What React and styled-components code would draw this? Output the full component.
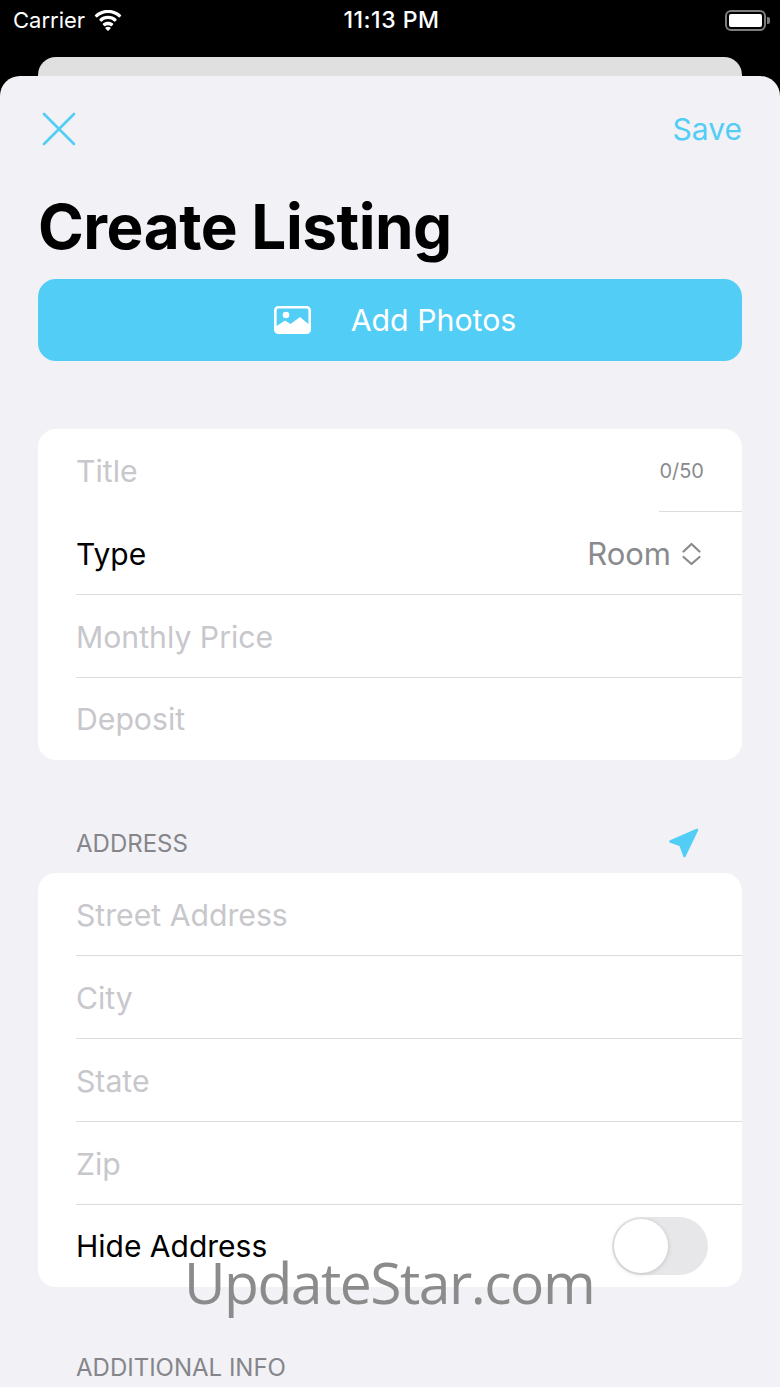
import styled, { createGlobalStyle } from 'styled-components';

const Global = createGlobalStyle`
  html, body {
    margin: 0;
    padding: 0;
    background: #000;
  }
  * {
    box-sizing: border-box;
  }
`;

function Wifi() {
  return (
    <svg width='28' height='21' viewBox='0 0 30 22'>
      <path fill='#fff' d='M15 3c4.400 0 8.500 1.700 11.500 4.600.3.300.8.300 1.100 0l1.300-1.400c.4-.4.3-.9 0-1.200C25.200 1.500 20.300-.5 15-.5S4.800 1.500 1.100 5c-.3.300-.4.800 0 1.200l1.300 1.400c.3.300.8.300 1.100 0C6.500 4.700 10.600 3 15 3z' />
      <path fill='#fff' d='M15 9.500c2.500 0 4.800.9 6.600 2.600.3.300.8.300 1.100 0l1.400-1.400c.3-.4.3-.9 0-1.200C21.700 7.200 18.500 6 15 6s-6.700 1.200-9.100 3.500c-.3.300-.3.800 0 1.200l1.400 1.400c.3.300.8.300 1.100 0 1.800-1.700 4.100-2.600 6.600-2.600z' />
      <path fill='#fff' d='M15 16c1.100 0 2.100.4 2.900 1 .3.300.8.300 1.100 0l1.400-1.500c.3-.3.3-.9 0-1.200-1.500-1.200-3.400-1.900-5.400-1.900s-3.900.7-5.400 1.900c-.3.300-.3.900 0 1.200L11 17c.3.300.8.300 1.100 0 .8-.6 1.800-1 2.900-1z' />
      <path fill='#fff' d='M15 22c.3 0 .5-.1.700-.3l2-2c.3-.3.300-.8 0-1.100-.7-.5-1.700-.9-2.700-.9s-2 .4-2.700.9c-.3.300-.3.800 0 1.100l2 2c.2.200.4.300.7.300z' />
    </svg>
  );
}

function CloseIcon() {
  return (
    <svg width='34' height='34' viewBox='0 0 34 34'>
      <path d='M2 2 L32 32 M32 2 L2 32' stroke='#52cdf6' strokeWidth='2.6' strokeLinecap='round' />
    </svg>
  );
}

function PhotoIcon() {
  return (
    <svg width='37' height='28' viewBox='0 0 37 28'>
      <rect x='1.300' y='1.300' width='34.400' height='25.400' rx='3' fill='none' stroke='#fff' strokeWidth='2.600' />
      <circle cx='12' cy='9' r='3.300' fill='#fff' />
      <path fill='#fff' d='M2 26 V20.500 L11 14.500 L16.500 18 L26 11 L35 18.500 V26 Z' />
    </svg>
  );
}

function Chevrons() {
  return (
    <svg width='21' height='24' viewBox='0 0 21 24'>
      <path d='M2.500 9.500 L10.500 2 L18.500 9.500 M2.500 15 L10.500 22 L18.500 15' fill='none' stroke='#8a8a8e' strokeWidth='2.200' strokeLinecap='round' strokeLinejoin='round' />
    </svg>
  );
}

function LocationArrow() {
  return (
    <svg width='32' height='32' viewBox='0 0 32 32'>
      <path fill='#52cdf6' stroke='#52cdf6' strokeWidth='2.500' strokeLinejoin='round' d='M29 3 L2.500 14.500 L12.500 18 L16.500 29 Z' />
    </svg>
  );
}

function App() {
  return (
    <Screen>
      <Global />
      <StatusBar>
        <StatusLeft>
          Carrier
          <Wifi />
        </StatusLeft>
        <Clock>11:13 PM</Clock>
        <Battery>
          <BatteryBody>
            <BatteryFill />
          </BatteryBody>
          <BatteryCap />
        </Battery>
      </StatusBar>
      <PeekCard />
      <Sheet>
        <NavRow>
          <CloseIcon />
          <SaveLabel>Save</SaveLabel>
        </NavRow>
        <PageTitle>Create Listing</PageTitle>
        <AddPhotos>
          <PhotoIcon />
          Add Photos
        </AddPhotos>

        <FormCard $top='68px'>
          <Row $partial>
            <Placeholder>Title</Placeholder>
            <Counter>0/50</Counter>
          </Row>
          <Row>
            <Label>Type</Label>
            <Picker>
              Room
              <Chevrons />
            </Picker>
          </Row>
          <Row>
            <Placeholder>Monthly Price</Placeholder>
          </Row>
          <Row $last>
            <Placeholder>Deposit</Placeholder>
          </Row>
        </FormCard>

        <SectionHead $top='53px'>
          ADDRESS
          <LocationArrow />
        </SectionHead>
        <FormCard>
          <Row>
            <Placeholder>Street Address</Placeholder>
          </Row>
          <Row>
            <Placeholder>City</Placeholder>
          </Row>
          <Row>
            <Placeholder>State</Placeholder>
          </Row>
          <Row>
            <Placeholder>Zip</Placeholder>
          </Row>
          <Row $last>
            <Label>Hide Address</Label>
            <Toggle>
              <Knob />
            </Toggle>
          </Row>
        </FormCard>

        <SectionHead $top='50px'>ADDITIONAL INFO</SectionHead>
      </Sheet>
      <Watermark>UpdateStar.com</Watermark>
    </Screen>
  );
}

const Screen = styled.div`
  position: relative;
  width: 780px;
  height: 1387px;
  overflow: hidden;
  background: #000;
  font-family: Inter, 'Liberation Sans', sans-serif;
`;

const StatusBar = styled.div`
  display: flex;
  align-items: center;
  justify-content: space-between;
  height: 57px;
  padding: 0 10px 17px 13px;
  color: #fff;
  font-size: 22px;
`;

const StatusLeft = styled.div`
  display: flex;
  align-items: center;
  gap: 9px;
  width: 200px;
`;

const Clock = styled.div`
  font-size: 23px;
  font-weight: 500;
  letter-spacing: 0.5px;
`;

const Battery = styled.div`
  display: flex;
  align-items: center;
  justify-content: flex-end;
  gap: 1px;
  width: 200px;
`;

const BatteryBody = styled.div`
  width: 41px;
  height: 21px;
  padding: 2px;
  border: 2px solid #7d7d7d;
  border-radius: 6px;
`;

const BatteryFill = styled.div`
  height: 100%;
  background: #fff;
  border-radius: 2px;
`;

const BatteryCap = styled.div`
  width: 3px;
  height: 7px;
  background: #7d7d7d;
  border-radius: 0 2px 2px 0;
`;

const PeekCard = styled.div`
  height: 19px;
  margin: 0 38px;
  background: #e0e0e0;
  border-radius: 18px 18px 0 0;
`;

const Sheet = styled.div`
  height: 1311px;
  padding: 36px 38px 0;
  background: #f1f1f6;
  border-radius: 20px 20px 0 0;
`;

const NavRow = styled.div`
  display: flex;
  align-items: center;
  justify-content: space-between;
  height: 34px;
  padding-left: 4px;
`;

const SaveLabel = styled.span`
  color: #52cdf6;
  font-size: 30px;
`;

const PageTitle = styled.h1`
  height: 133px;
  margin: 0;
  padding-top: 45px;
  color: #000;
  font-size: 62px;
  font-weight: 700;
  line-height: 72px;
  letter-spacing: -0.5px;
`;

const AddPhotos = styled.div`
  display: flex;
  align-items: center;
  justify-content: center;
  gap: 40px;
  height: 82px;
  padding-left: 10px;
  color: #fff;
  background: #52cdf6;
  border-radius: 18px;
  font-size: 30.300px;
`;

const FormCard = styled.div`
  margin-top: ${(p) => p.$top || '0'};
  padding-left: 38px;
  background: #fff;
  border-radius: 18px;
  overflow: hidden;
`;

const Row = styled.div`
  position: relative;
  display: flex;
  align-items: center;
  justify-content: space-between;
  height: ${(p) => (p.$last ? '82px' : '83px')};
  padding-right: 38px;

  &::after {
    content: '';
    display: ${(p) => (p.$last ? 'none' : 'block')};
    position: absolute;
    right: 0;
    bottom: 0;
    left: ${(p) => (p.$partial ? '583px' : '0')};
    height: 1px;
    background: #dcdce0;
  }
`;

const Placeholder = styled.span`
  color: #c7c7cc;
  font-size: 30.200px;
`;

const Label = styled.span`
  color: #000;
  font-size: 30px;
`;

const Counter = styled.span`
  color: #8a8a8e;
  font-size: 20px;
`;

const Picker = styled.span`
  display: flex;
  align-items: center;
  gap: 10px;
  margin-right: 2px;
  color: #8a8a8e;
  font-size: 31px;
`;

const Toggle = styled.div`
  display: flex;
  align-items: center;
  width: 96px;
  height: 58px;
  margin-right: -4px;
  padding: 2px;
  background: #e7e7ea;
  border-radius: 29px;
`;

const Knob = styled.div`
  width: 54px;
  height: 54px;
  background: #fff;
  border-radius: 50%;
  box-shadow: 0 1px 5px rgba(0, 0, 0, 0.16);
`;

const SectionHead = styled.div`
  display: flex;
  align-items: center;
  justify-content: space-between;
  height: 60px;
  margin-top: ${(p) => p.$top};
  padding: 0 42px 0 38px;
  color: #85858a;
  font-size: 24px;
`;

const Watermark = styled.div`
  position: absolute;
  left: 184px;
  top: 1243px;
  color: #8b8b8b;
  font-family: 'Open Sans', sans-serif;
  font-size: 57px;
  font-weight: 400;
  line-height: 78px;
  letter-spacing: -1.500px;
  white-space: nowrap;
  pointer-events: none;
`;

export default App;
